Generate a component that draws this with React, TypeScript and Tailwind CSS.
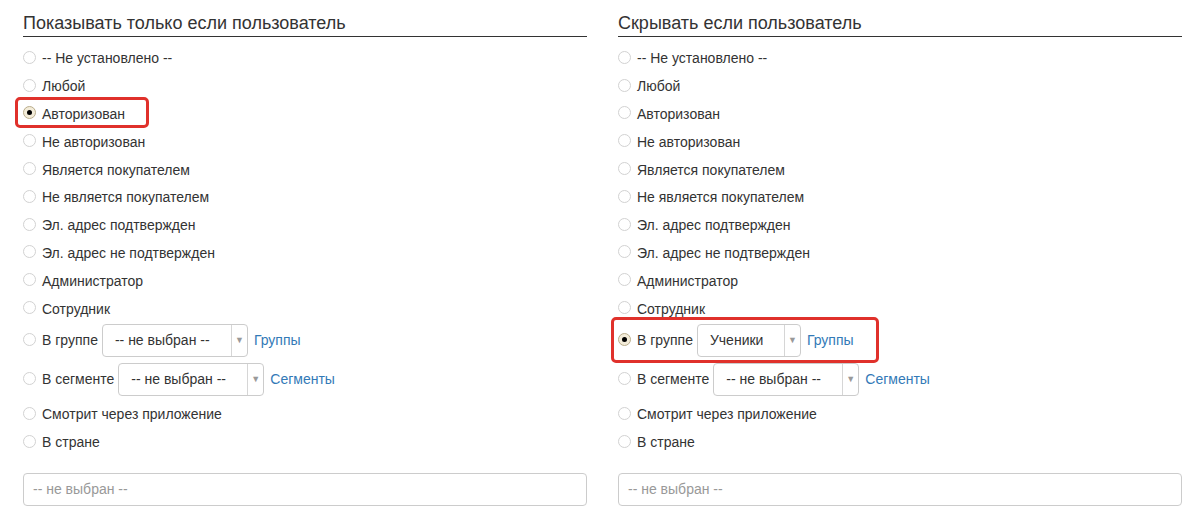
import type { ReactNode } from "react";

const font = { fontFamily: '"Liberation Sans", Arial, sans-serif' };

type Option = {
  label: string;
  select?: { value: string; width: string; link: string };
  checked?: boolean;
  rowClass?: string;
};

const baseOptions = [
  "-- Не установлено --",
  "Любой",
  "Авторизован",
  "Не авторизован",
  "Является покупателем",
  "Не является покупателем",
  "Эл. адрес подтвержден",
  "Эл. адрес не подтвержден",
  "Администратор",
  "Сотрудник",
];

function Radio({ checked = false }: { checked?: boolean }) {
  return (
    <span
      className={
        checked
          ? "mb-[3px] flex h-[13px] w-[13px] shrink-0 items-center justify-center rounded-full border border-[#b9ad8c] bg-[#f3ecd9]"
          : "mb-[3px] h-[13px] w-[13px] shrink-0 rounded-full border border-[#d2d2d2] bg-white"
      }
    >
      {checked ? <span className="h-[5px] w-[5px] rounded-full bg-black" /> : null}
    </span>
  );
}

function SelectBox({ value, width }: { value: string; width: string }) {
  return (
    <div
      className={`flex h-[33px] ${width} shrink-0 items-stretch rounded-[4px] border border-[#cccccc] bg-white text-[14px] text-[#333]`}
    >
      <span className="flex flex-1 items-center pl-[12px]">{value}</span>
      <span className="flex w-[16px] items-center justify-center border-l border-[#d6d6d6] text-[9px] text-[#999]">
        ▼
      </span>
    </div>
  );
}

function Row({ option }: { option: Option }) {
  return (
    <div className={`flex items-center gap-[6px] ${option.rowClass ?? "h-[27.8px]"}`}>
      <Radio checked={option.checked} />
      <span className="text-[14px] text-[#333]">{option.label}</span>
      {option.select ? (
        <div className="ml-[-2px] flex items-center gap-[6px]">
          <SelectBox value={option.select.value} width={option.select.width} />
          <a className="text-[14px] text-[#337ab7]">{option.select.link}</a>
        </div>
      ) : null}
    </div>
  );
}

function Column({
  title,
  checkedIndex,
  groupValue,
  groupWidth,
  highlight,
}: {
  title: string;
  checkedIndex: number;
  groupValue: string;
  groupWidth: string;
  highlight: ReactNode;
}) {
  const options: Option[] = [
    ...baseOptions.map((label, i) => ({ label, checked: i === checkedIndex })),
    {
      label: "В группе",
      checked: checkedIndex === 10,
      rowClass: "h-[36px]",
      select: { value: groupValue, width: groupWidth, link: "Группы" },
    },
    {
      label: "В сегменте",
      rowClass: "h-[42px]",
      select: { value: "-- не выбран --", width: "w-[146px]", link: "Сегменты" },
    },
    { label: "Смотрит через приложение" },
    { label: "В стране" },
  ];

  return (
    <div className="relative">
      <h2 className="border-b border-[#333] pb-[2px] pt-[13px] text-[18px] font-normal leading-[21px] text-[#333]">
        {title}
      </h2>
      <div className="mt-[8px] flex flex-col">
        {options.map((option) => (
          <Row key={option.label} option={option} />
        ))}
      </div>
      <div className="mt-[16px] flex h-[33px] items-center rounded-[4px] border border-[#cccccc] bg-white px-[9px] text-[14px] text-[#999]">
        -- не выбран --
      </div>
      {highlight}
    </div>
  );
}

export default function App() {
  return (
    <div className="min-h-[531px] w-[1200px] bg-white" style={font}>
      <div className="grid grid-cols-[564px_564px] gap-[31px] pl-[23px]">
        <Column
          title="Показывать только если пользователь"
          checkedIndex={2}
          groupValue="-- не выбран --"
          groupWidth="w-[146px]"
          highlight={
            <div className="pointer-events-none absolute left-[-8px] top-[97px] h-[31px] w-[134px] rounded-[5px] border-[3px] border-[#e0312b]" />
          }
        />
        <Column
          title="Скрывать если пользователь"
          checkedIndex={10}
          groupValue="Ученики"
          groupWidth="w-[104px]"
          highlight={
            <div className="pointer-events-none absolute left-[-7px] top-[317px] h-[46px] w-[268px] rounded-[5px] border-[3px] border-[#e0312b]" />
          }
        />
      </div>
    </div>
  );
}
